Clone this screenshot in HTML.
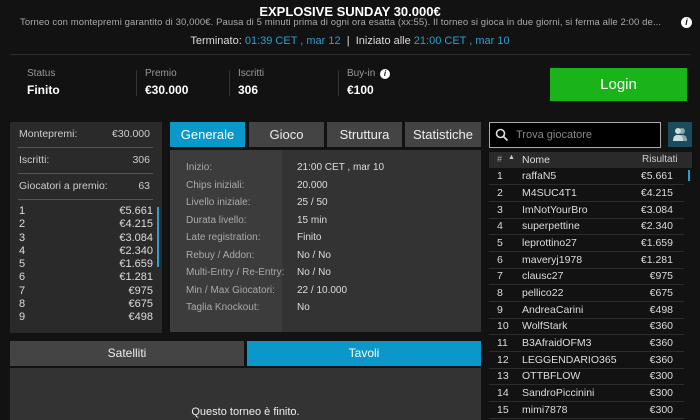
<!DOCTYPE html><html><head><style>
*{margin:0;padding:0;box-sizing:border-box}
body{width:700px;height:420px;background:#121212;color:#ddd;font-family:"Liberation Sans",sans-serif;position:relative;overflow:hidden;font-size:11px}
.a{position:absolute;white-space:nowrap}
.c{text-align:center}
.blue{color:#2a9fd0}
.tab{position:absolute;top:122px;height:25px;background:#444;color:#eee;font-size:13px;text-align:center;line-height:25px}
.lrow{position:absolute;left:10px;width:152px;font-size:10.5px;color:#ccc}
.gl{position:absolute;left:186px;font-size:10px;color:#aaa}
.gv{position:absolute;left:297px;font-size:10px;color:#ddd}
.pr{position:absolute;left:489px;width:195px;height:17px;border-bottom:1px solid #2c2c2c;font-size:10.5px;line-height:17px;color:#ddd}
</style></head><body>
<div class="a c" style="left:0;width:700px;top:4px;font-size:13px;font-weight:bold;color:#fff">EXPLOSIVE SUNDAY 30.000€</div>
<div class="a" style="left:20px;top:17px;font-size:9.5px;color:#aaa;width:655px;overflow:hidden;letter-spacing:0.1px">Torneo con montepremi garantito di 30,000€. Pausa di 5 minuti prima di ogni ora esatta (xx:55). Il torneo si gioca in due giorni, si ferma alle 2:00 de...</div>
<div class="a" style="left:681px;top:17px;width:11px;height:11px;border-radius:50%;background:#fff;color:#111;font-size:9px;font-weight:bold;font-style:italic;text-align:center;line-height:11px">i</div>
<div class="a c" style="left:0;width:700px;top:35px;font-size:11px;color:#ddd">Terminato: <span class="blue">01:39 CET , mar 12</span> &nbsp;|&nbsp; Iniziato alle <span class="blue">21:00 CET , mar 10</span></div>
<div class="a" style="left:10px;top:54px;width:680px;height:1px;background:#2e2e2e"></div>
<div class="a" style="left:27px;top:68px;font-size:10px;color:#999">Status</div>
<div class="a" style="left:27px;top:83px;font-size:12px;font-weight:bold;color:#fff">Finito</div>
<div class="a" style="left:136px;top:70px;width:1px;height:26px;background:#333"></div>
<div class="a" style="left:145px;top:68px;font-size:10px;color:#999">Premio</div>
<div class="a" style="left:145px;top:83px;font-size:12px;font-weight:bold;color:#fff">€30.000</div>
<div class="a" style="left:229px;top:70px;width:1px;height:26px;background:#333"></div>
<div class="a" style="left:238px;top:68px;font-size:10px;color:#999">Iscritti</div>
<div class="a" style="left:238px;top:83px;font-size:12px;font-weight:bold;color:#fff">306</div>
<div class="a" style="left:338px;top:70px;width:1px;height:26px;background:#333"></div>
<div class="a" style="left:347px;top:68px;font-size:10px;color:#999">Buy-in</div>
<div class="a" style="left:380px;top:69px;width:10px;height:10px;border-radius:50%;background:#fff;color:#111;font-size:8px;font-weight:bold;font-style:italic;text-align:center;line-height:10px">i</div>
<div class="a" style="left:347px;top:83px;font-size:12px;font-weight:bold;color:#fff">€100</div>
<div class="a c" style="left:550px;top:68px;width:137px;height:33px;background:#1ab31a;color:#fff;font-size:15px;line-height:33px">Login</div>

<div class="a" style="left:10px;top:122px;width:152px;height:211px;background:#2a2a2a"></div>
<div class="lrow" style="top:128px"><span style="position:absolute;left:9px">Montepremi:</span><span style="position:absolute;right:12px">€30.000</span></div>
<div class="a" style="left:18px;top:147px;width:135px;height:1px;background:#555"></div>
<div class="lrow" style="top:154px"><span style="position:absolute;left:9px">Iscritti:</span><span style="position:absolute;right:12px">306</span></div>
<div class="a" style="left:18px;top:173px;width:135px;height:1px;background:#555"></div>
<div class="lrow" style="top:180px"><span style="position:absolute;left:9px">Giocatori a premio:</span><span style="position:absolute;right:12px">63</span></div>
<div class="a" style="left:18px;top:199px;width:135px;height:1px;background:#555"></div>
<div class="a" style="left:157px;top:207px;width:2px;height:60px;background:#2a9fd0"></div>
<div class="a" style="left:19px;top:205px;font-size:11px;line-height:13.3px;color:#ddd">1<br>2<br>3<br>4<br>5<br>6<br>7<br>8<br>9</div>
<div class="a" style="left:100px;width:53px;text-align:right;top:205px;font-size:11px;line-height:13.3px;color:#ddd">€5.661<br>€4.215<br>€3.084<br>€2.340<br>€1.659<br>€1.281<br>€975<br>€675<br>€498</div>

<div class="tab" style="left:170px;width:75px;background:#0a97c9;color:#fff">Generale</div>
<div class="tab" style="left:249px;width:75px">Gioco</div>
<div class="tab" style="left:327px;width:75px">Struttura</div>
<div class="tab" style="left:405px;width:76px">Statistiche</div>
<div class="a" style="left:170px;top:150px;width:311px;height:182px;background:#333"></div>
<div class="a" style="left:170px;top:150px;width:112px;height:182px;background:#3c3c3c"></div>
<div class="gl" style="top:162px">Inizio:</div><div class="gv" style="top:162px">21:00 CET , mar 10</div>
<div class="gl" style="top:180px">Chips iniziali:</div><div class="gv" style="top:180px">20.000</div>
<div class="gl" style="top:197px">Livello iniziale:</div><div class="gv" style="top:197px">25 / 50</div>
<div class="gl" style="top:215px">Durata livello:</div><div class="gv" style="top:215px">15 min</div>
<div class="gl" style="top:232px">Late registration:</div><div class="gv" style="top:232px">Finito</div>
<div class="gl" style="top:250px">Rebuy / Addon:</div><div class="gv" style="top:250px">No / No</div>
<div class="gl" style="top:267px">Multi-Entry / Re-Entry:</div><div class="gv" style="top:267px">No / No</div>
<div class="gl" style="top:285px">Min / Max Giocatori:</div><div class="gv" style="top:285px">22 / 10.000</div>
<div class="gl" style="top:302px">Taglia Knockout:</div><div class="gv" style="top:302px">No</div>

<div class="a c" style="left:10px;top:341px;width:234px;height:25px;background:#444;color:#eee;font-size:12px;line-height:25px">Satelliti</div>
<div class="a c" style="left:247px;top:341px;width:234px;height:25px;background:#0a97c9;color:#fff;font-size:12px;line-height:25px">Tavoli</div>
<div class="a" style="left:10px;top:368px;width:471px;height:52px;background:#333"></div>
<div class="a c" style="left:10px;width:471px;top:406px;font-size:11px;color:#eee">Questo torneo è finito.</div>

<div class="a" style="left:489px;top:122px;width:172px;height:26px;background:#000;border:1px solid #aaa"></div>
<svg class="a" style="left:495px;top:128px" width="14" height="14" viewBox="0 0 14 14"><circle cx="5.5" cy="5.5" r="4" stroke="#ddd" stroke-width="1.6" fill="none"/><path d="M8.5 8.5L12.5 12.5" stroke="#ddd" stroke-width="1.8"/></svg>
<div class="a" style="left:516px;top:129px;font-size:11px;color:#888">Trova giocatore</div>
<div class="a" style="left:668px;top:122px;width:24px;height:25px;background:#1b4b5c"></div>
<svg class="a" style="left:672px;top:127px" width="16" height="14" viewBox="0 0 16 14"><circle cx="10" cy="4" r="3" fill="#8aa"/><path d="M5 14C5 9 7 8 10 8S15 9 15 14Z" fill="#8aa"/><circle cx="6" cy="4" r="3" fill="#cdd"/><path d="M1 14C1 9 3 8 6 8S11 9 11 14Z" fill="#cdd"/></svg>
<div class="a" style="left:489px;top:152px;width:203px;height:16px;background:#2a2a2a"></div>
<div class="a" style="left:497px;top:154px;font-size:9px;color:#aaa">#</div>
<div class="a" style="left:508px;top:154px;font-size:7px;color:#ccc">▲</div>
<div class="a" style="left:522px;top:154px;font-size:10.5px;color:#ddd">Nome</div>
<div class="a" style="left:642px;top:154px;font-size:10px;color:#ccc">Risultati</div>
<div class="a" style="left:688px;top:170px;width:2px;height:11px;background:#2a9fd0"></div>
<div class="pr" style="top:168px"><span style="position:absolute;left:8px">1</span><span style="position:absolute;left:33px">raffaN5</span><span style="position:absolute;right:11px">€5.661</span></div>
<div class="pr" style="top:185px"><span style="position:absolute;left:8px">2</span><span style="position:absolute;left:33px">M4SUC4T1</span><span style="position:absolute;right:11px">€4.215</span></div>
<div class="pr" style="top:202px"><span style="position:absolute;left:8px">3</span><span style="position:absolute;left:33px">ImNotYourBro</span><span style="position:absolute;right:11px">€3.084</span></div>
<div class="pr" style="top:218px"><span style="position:absolute;left:8px">4</span><span style="position:absolute;left:33px">superpettine</span><span style="position:absolute;right:11px">€2.340</span></div>
<div class="pr" style="top:235px"><span style="position:absolute;left:8px">5</span><span style="position:absolute;left:33px">leprottino27</span><span style="position:absolute;right:11px">€1.659</span></div>
<div class="pr" style="top:252px"><span style="position:absolute;left:8px">6</span><span style="position:absolute;left:33px">maveryj1978</span><span style="position:absolute;right:11px">€1.281</span></div>
<div class="pr" style="top:268px"><span style="position:absolute;left:8px">7</span><span style="position:absolute;left:33px">clausc27</span><span style="position:absolute;right:11px">€975</span></div>
<div class="pr" style="top:285px"><span style="position:absolute;left:8px">8</span><span style="position:absolute;left:33px">pellico22</span><span style="position:absolute;right:11px">€675</span></div>
<div class="pr" style="top:302px"><span style="position:absolute;left:8px">9</span><span style="position:absolute;left:33px">AndreaCarini</span><span style="position:absolute;right:11px">€498</span></div>
<div class="pr" style="top:318px"><span style="position:absolute;left:8px">10</span><span style="position:absolute;left:33px">WolfStark</span><span style="position:absolute;right:11px">€360</span></div>
<div class="pr" style="top:335px"><span style="position:absolute;left:8px">11</span><span style="position:absolute;left:33px">B3AfraidOFM3</span><span style="position:absolute;right:11px">€360</span></div>
<div class="pr" style="top:352px"><span style="position:absolute;left:8px">12</span><span style="position:absolute;left:33px">LEGGENDARIO365</span><span style="position:absolute;right:11px">€360</span></div>
<div class="pr" style="top:368px"><span style="position:absolute;left:8px">13</span><span style="position:absolute;left:33px">OTTBFLOW</span><span style="position:absolute;right:11px">€300</span></div>
<div class="pr" style="top:385px"><span style="position:absolute;left:8px">14</span><span style="position:absolute;left:33px">SandroPiccinini</span><span style="position:absolute;right:11px">€300</span></div>
<div class="pr" style="top:402px"><span style="position:absolute;left:8px">15</span><span style="position:absolute;left:33px">mimi7878</span><span style="position:absolute;right:11px">€300</span></div>
</body></html>
